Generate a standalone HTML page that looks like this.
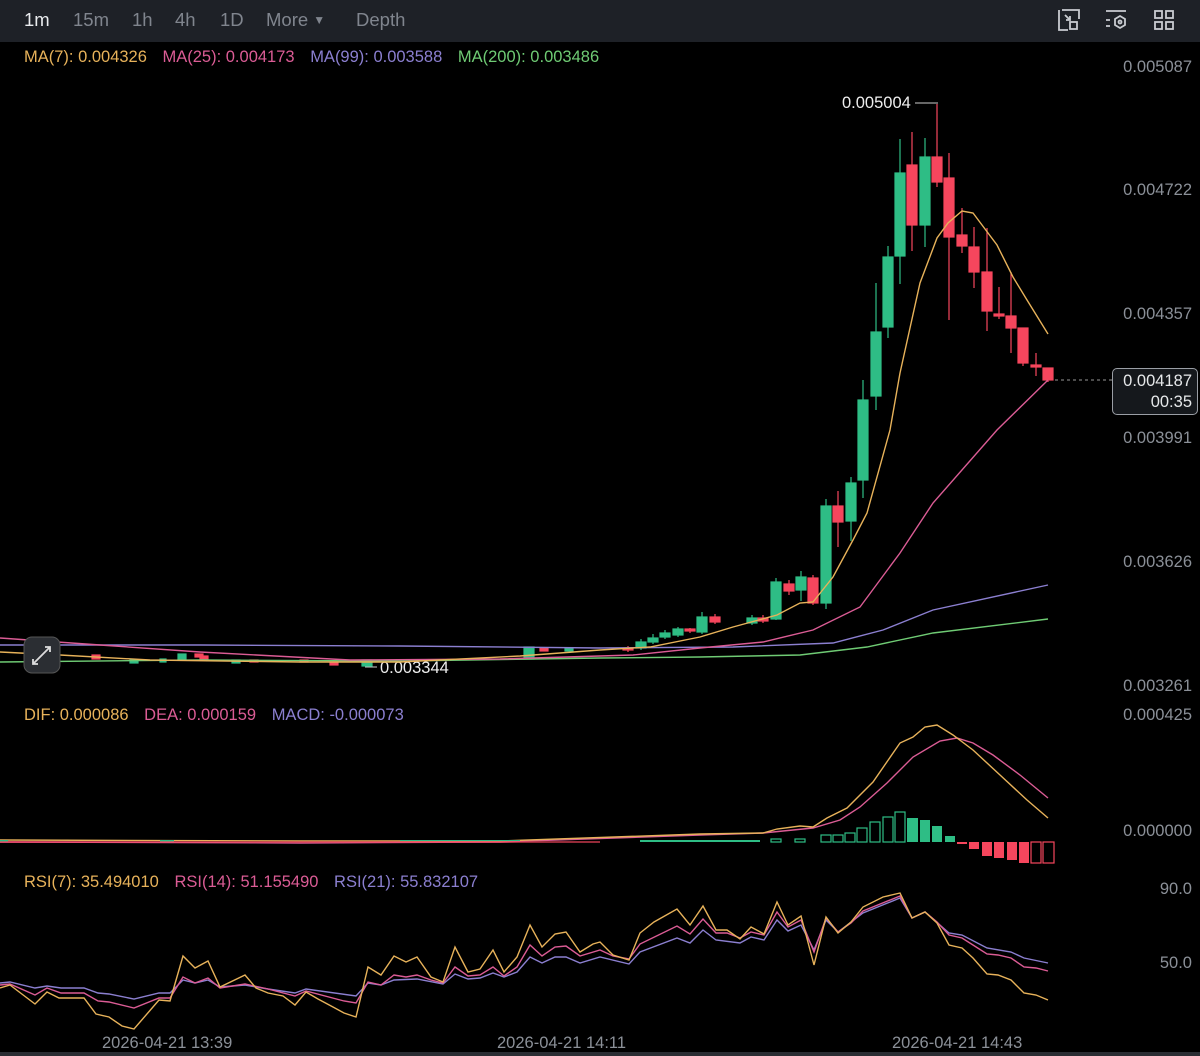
<!DOCTYPE html>
<html><head><meta charset="utf-8"><style>
*{margin:0;padding:0}
body{width:1200px;height:1056px;background:#000;overflow:hidden;font-family:"Liberation Sans",sans-serif;position:relative}
.top{position:absolute;left:0;top:0;width:1200px;height:42px;background:#1e2127}
.t{position:absolute;top:9px;font-size:18.5px;color:#80858e}
.ax{position:absolute;right:8px;font-size:16.5px;color:#8b9098;text-align:right}
.lbl{position:absolute;font-size:16.5px;white-space:nowrap}
.lbl span{margin-right:11px}
</style></head><body>
<div class="top">
<span class="t" style="left:24px;color:#eaecef">1m</span>
<span class="t" style="left:73px">15m</span>
<span class="t" style="left:132px">1h</span>
<span class="t" style="left:175px">4h</span>
<span class="t" style="left:220px">1D</span>
<span class="t" style="left:266px">More <span style="font-size:12px;position:relative;top:-2px">▼</span></span>
<span class="t" style="left:356px">Depth</span>
<svg style="position:absolute;left:1056px;top:7px" width="126" height="26" fill="none" stroke="#c9ccd1" stroke-width="1.8">
<path d="M6 3h17v9M3 6v17h9M3 3v3M9 8l5 5M14 9v4h-4"/><rect x="14" y="15" width="7" height="7"/>
<path d="M50 4h20M50 13h4M50 19h4"/><path d="M64 9l5 3v6l-5 3-5-3v-6z"/><circle cx="64" cy="15" r="1.5"/>
<rect x="99" y="4" width="7" height="7"/><rect x="110" y="4" width="7" height="7"/><rect x="99" y="15" width="7" height="7"/><rect x="110" y="15" width="7" height="7"/>
</svg>
</div>
<div class="lbl" style="left:24px;top:48px"><span style="color:#e7b25a">MA(7): 0.004326</span> <span style="color:#db5c95">MA(25): 0.004173</span> <span style="color:#8b7fd0">MA(99): 0.003588</span> <span style="color:#6fcb74">MA(200): 0.003486</span></div>
<div class="ax" style="top:58px">0.005087</div>
<div class="ax" style="top:181px">0.004722</div>
<div class="ax" style="top:305px">0.004357</div>
<div class="ax" style="top:429px">0.003991</div>
<div class="ax" style="top:553px">0.003626</div>
<div class="ax" style="top:677px">0.003261</div>
<div class="ax" style="top:706px">0.000425</div>
<div class="ax" style="top:822px">0.000000</div>
<div class="ax" style="top:880px">90.0</div>
<div class="ax" style="top:954px">50.0</div>
<div style="position:absolute;left:1112px;top:368px;width:84px;height:45px;border:1px solid #9a9ea5;border-radius:5px;background:#15181c;color:#e6e8ea;font-size:16.5px;text-align:right;line-height:21px"><div style="padding:2px 5px 0 0">0.004187<br>00:35</div></div>
<div class="lbl" style="left:24px;top:706px"><span style="color:#e7b25a">DIF: 0.000086</span> <span style="color:#db5c95">DEA: 0.000159</span> <span style="color:#8b7fd0">MACD: -0.000073</span></div>
<div class="lbl" style="left:24px;top:873px"><span style="color:#e7b25a">RSI(7): 35.494010</span> <span style="color:#db5c95">RSI(14): 51.155490</span> <span style="color:#8b7fd0">RSI(21): 55.832107</span></div>
<div class="lbl" style="left:102px;top:1034px;color:#8b9098">2026-04-21 13:39</div>
<div class="lbl" style="left:497px;top:1034px;color:#8b9098">2026-04-21 14:11</div>
<div class="lbl" style="left:892px;top:1034px;color:#8b9098">2026-04-21 14:43</div>
<div style="position:absolute;left:0;top:1052px;width:1200px;height:4px;background:#2a2d33"></div>
<div class="lbl" style="left:842px;top:94px;color:#eee">0.005004</div>
<div class="lbl" style="left:380px;top:659px;color:#eee">0.003344</div>
<svg style="position:absolute;left:0;top:0" width="1200" height="1056">
<g stroke="#ccc" stroke-width="1"><path d="M915 103h23"/><path d="M365 667h12"/></g>
<path d="M1055 380H1112" stroke="#999" stroke-dasharray="3,3"/>
<g fill="#2ebd85" stroke="#2ebd85" stroke-width="1.2">
<path d="M863 380v118M851 477v64M826 499v110M801 571v30M776 578v42M752 615v10M702 612v22M678 627v10M665 630v9M653 634v10M641 639v11M876 283v127M888 246v92M900 139v145M925 138v109"/>
<rect x="858" y="400" width="10" height="80"/><rect x="846" y="483" width="10" height="38"/><rect x="821" y="506" width="10" height="97"/>
<rect x="796" y="577" width="10" height="13"/><rect x="771" y="582" width="10" height="37"/><rect x="747" y="618" width="10" height="5"/>
<rect x="697" y="617" width="10" height="15"/><rect x="673" y="629" width="10" height="6"/><rect x="660" y="633" width="10" height="4"/>
<rect x="648" y="638" width="10" height="4"/><rect x="636" y="642" width="10" height="6"/>
<rect x="871" y="332" width="10" height="64"/><rect x="883" y="257" width="10" height="70"/><rect x="895" y="173" width="10" height="83"/><rect x="920" y="157" width="10" height="68"/>
<rect x="524" y="647" width="10" height="12"/><rect x="362" y="660" width="10" height="6"/><rect x="178" y="654" width="8" height="6"/><rect x="232" y="660" width="8" height="3"/><rect x="130" y="660" width="8" height="3"/><rect x="565" y="648" width="8" height="3"/><rect x="160" y="659" width="6" height="3"/>
</g>
<g fill="#f6465d" stroke="#f6465d" stroke-width="1.2">
<path d="M838 491v56M813 575v30M789 580v15M763 615v8M715 614v10M690 628v5M628 646v6M912 132v119M937 104v83M949 153v167M962 208v45M974 227v61M987 228v103M999 287v32M1011 272v81M1023 328v38M1036 353v23M1048 368v14"/>
<rect x="833" y="506" width="10" height="16"/><rect x="808" y="578" width="10" height="25"/><rect x="784" y="584" width="10" height="7"/>
<rect x="758" y="618" width="10" height="3"/><rect x="710" y="617" width="10" height="5"/><rect x="685" y="629" width="10" height="2"/><rect x="623" y="648" width="10" height="2"/>
<rect x="907" y="165" width="10" height="60"/><rect x="932" y="157" width="10" height="25"/><rect x="944" y="178" width="10" height="59"/><rect x="957" y="235" width="10" height="11"/>
<rect x="969" y="247" width="10" height="25"/><rect x="982" y="272" width="10" height="39"/><rect x="994" y="314" width="10" height="2"/><rect x="1006" y="316" width="10" height="12"/>
<rect x="1018" y="328" width="10" height="35"/><rect x="1031" y="365" width="10" height="2"/><rect x="1043" y="368" width="10" height="12"/>
<rect x="92" y="655" width="8" height="4"/><rect x="200" y="656" width="8" height="3"/><rect x="250" y="660" width="8" height="2"/><rect x="330" y="662" width="8" height="3"/><rect x="195" y="654" width="8" height="3"/><rect x="540" y="648" width="8" height="3"/><rect x="300" y="660" width="8" height="2"/>
</g>
<g fill="none" stroke-width="1.4">
<polyline stroke="#6fcb74" points="0,662 200,660 400,661 600,658 700,657 800,655 867,647 933,633 1048,619"/>
<polyline stroke="#8b7fd0" points="0,645 200,645 400,646 600,648 733,647 833,643 883,630 933,610 1048,585"/>
<polyline stroke="#db5c95" points="0,638 100,645 200,652 350,660 500,659 633,655 700,648 763,642 813,630 860,607 900,553 933,503 997,430 1048,380"/>
<polyline stroke="#e7b25a" points="0,652 60,655 150,660 300,662 400,662 520,656 600,650 650,647 700,637 733,627 777,615 800,603 813,602 833,577 853,540 867,513 890,430 900,373 920,283 937,238 948,223 962,211 973,213 997,245 1013,277 1027,300 1048,334"/>
</g>
<rect x="24" y="637" width="36" height="36" rx="8" fill="#2b2e33" stroke="#555" />
<path d="M33 664l17-17M45 647h5v5M33 659v5h5" stroke="#ddd" stroke-width="1.8" fill="none"/>
<g fill="none" stroke-width="1.4">
<polyline stroke="#db5c95" points="0,842 300,843 500,842 700,835 763,833 813,828 840,820 860,807 887,783 913,757 940,741 957,738 973,743 993,755 1020,775 1048,798"/>
<polyline stroke="#e7b25a" points="0,840 300,841 500,841 700,834 763,833 777,829 800,826 813,827 827,818 847,808 873,782 900,743 913,737 925,727 937,725 953,735 973,750 1000,775 1027,800 1048,818"/>
</g>
<g stroke="#2ebd85" fill="none" stroke-width="1.2">
<rect x="821" y="835" width="10" height="7"/><rect x="833" y="835" width="10" height="7"/><rect x="845" y="833" width="10" height="9"/><rect x="857" y="828" width="10" height="14"/><rect x="870" y="822" width="10" height="20"/><rect x="883" y="817" width="10" height="25"/><rect x="895" y="812" width="10" height="30"/>
<rect x="771" y="839" width="10" height="3"/><rect x="795" y="839" width="10" height="3"/>
</g>
<g fill="#2ebd85"><rect x="907" y="818" width="11" height="24"/><rect x="920" y="820" width="10" height="22"/><rect x="932" y="826" width="10" height="16"/><rect x="945" y="836" width="10" height="6"/>
<rect x="0" y="840" width="8" height="2"/><rect x="160" y="840" width="14" height="2"/><rect x="400" y="840" width="120" height="1"/><rect x="640" y="840" width="120" height="2"/></g>
<g fill="#f6465d"><rect x="957" y="842" width="10" height="2"/><rect x="969" y="842" width="10" height="7"/><rect x="982" y="842" width="10" height="14"/><rect x="994" y="842" width="10" height="16"/><rect x="1007" y="842" width="10" height="18"/><rect x="1019" y="842" width="10" height="21"/>
<rect x="0" y="841" width="600" height="2" opacity=".6"/></g>
<g stroke="#f6465d" fill="none" stroke-width="1.2"><rect x="1031" y="842" width="10" height="21"/><rect x="1043" y="842" width="11" height="21"/></g>
<g fill="none" stroke-width="1.4">
<polyline stroke="#8b7fd0" points="0,983 10,982 35,988 47,986 61,988 84,988 98,993 109,994 134,999 159,993 170,993 183,980 195,983 208,980 220,987 245,985 268,989 295,993 306,989 356,996 368,983 381,985 394,980 417,979 443,984 455,974 468,979 480,978 493,973 504,977 517,972 530,957 542,963 555,957 566,957 580,963 600,957 629,964 640,952 677,938 690,943 703,930 716,940 740,943 751,937 764,940 777,920 788,931 801,925 814,950 826,920 838,932 863,913 900,898 912,918 925,912 949,933 962,935 987,948 1011,952 1024,958 1048,963"/>
<polyline stroke="#db5c95" points="0,985 10,984 35,995 47,988 61,993 84,993 98,1001 109,1002 134,1008 159,998 170,998 183,977 195,983 208,978 220,988 245,984 268,989 295,996 306,991 344,1001 356,1003 368,982 381,985 394,975 406,977 417,975 431,980 443,983 455,967 468,976 480,975 493,967 504,976 517,967 530,945 542,956 555,947 566,946 580,956 600,950 613,956 629,959 640,944 677,926 690,934 703,919 716,933 727,933 740,938 751,932 764,935 777,912 788,927 801,920 814,952 826,918 838,932 851,923 863,911 900,896 912,918 925,912 937,922 949,935 962,938 973,945 987,954 998,955 1011,958 1024,967 1036,968 1048,971"/>
<polyline stroke="#e7b25a" points="0,988 10,985 35,1004 47,992 59,998 84,998 96,1014 109,1017 122,1026 134,1029 159,1000 170,1001 183,956 195,968 208,961 220,987 245,975 256,988 268,993 283,996 295,1005 306,992 318,999 333,1007 344,1013 356,1017 368,967 381,975 394,956 406,962 417,957 431,977 443,982 455,947 468,972 480,969 493,950 504,972 517,957 530,925 542,947 555,934 566,932 580,952 593,944 600,942 613,955 629,960 640,933 654,922 677,909 690,925 703,906 716,930 727,930 740,939 751,927 764,934 777,902 788,925 801,916 814,965 826,917 838,933 851,922 863,907 883,897 900,893 912,918 925,912 937,923 949,945 962,948 973,958 987,974 998,975 1011,980 1024,993 1036,995 1048,1000"/>
</g>
</svg>
</body></html>
